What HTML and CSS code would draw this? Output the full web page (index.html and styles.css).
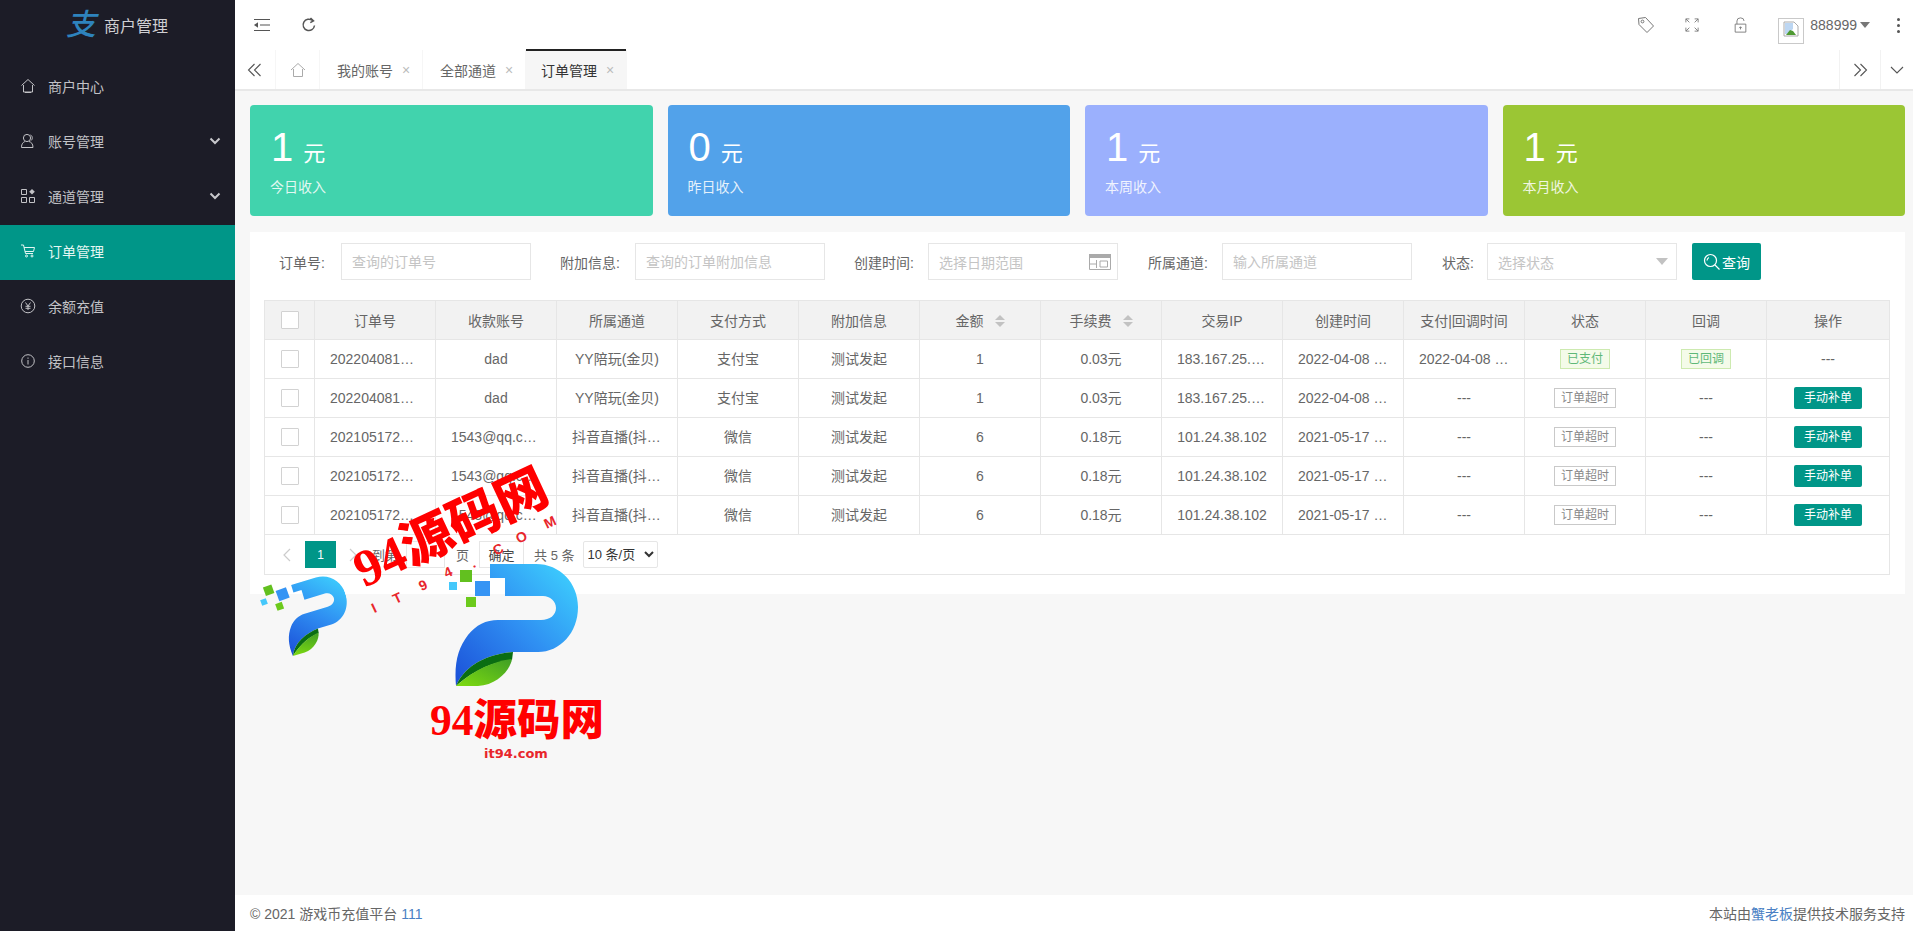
FILE: index.html
```html
<!DOCTYPE html>
<html lang="zh">
<head>
<meta charset="utf-8">
<title>商户管理</title>
<link rel="stylesheet" href="styles.css">
</head>
<body>
<svg class="defs" width="0" height="0">
  <defs>
    <linearGradient id="pBody" x1="0" y1="1" x2="1" y2="0">
      <stop offset="0" stop-color="#1b4fd8"/><stop offset="0.5" stop-color="#2f8ff2"/><stop offset="1" stop-color="#3fd6ff"/>
    </linearGradient>
    <linearGradient id="pLeaf" x1="0" y1="1" x2="1" y2="0">
      <stop offset="0" stop-color="#7fdc10"/><stop offset="1" stop-color="#3f9e25"/>
    </linearGradient>
    <symbol id="pmark" viewBox="0 0 130 124">
      <path fill="url(#pBody)" d="M42 1H88C112 1 130 20 130 44C130 70 112 89 90 89H65C42 91 18 100 8 123C6 100 10 85 20 72C28 62 38 57 50 57H93C102 57 108 52 108 45C108 38 102 33 95 33H57V15H42Z"/>
      <path fill="#0a6d12" d="M65 89C42 91 18 100 8 123C30 104 48 99 64 97Z"/>
      <path fill="url(#pLeaf)" d="M64 96C48 98 28 105 8 123H30C48 122 62 108 64 96Z"/>
    </symbol>
  </defs>
</svg>

<div class="app">
  <aside class="side">
    <div class="brand"><span class="brand-mark">支</span><span class="brand-name">商户管理</span></div>
    <nav class="menu">
      <a class="item">
        <svg class="ico" viewBox="0 0 16 16"><path d="M1.500 7.500 8 1.500l6.500 6M3.500 7v7h9V7M5 14.500h6"/></svg>
        <span>商户中心</span>
      </a>
      <a class="item">
        <svg class="ico" viewBox="0 0 16 16"><circle cx="7" cy="5" r="3.600"/><path d="M1.500 14.500c0-4 2-5.500 3.600-6M9 8.500c2.200.6 4 2.200 4 6H1.500M10.500 2c2 .8 2.500 4 .6 5.500"/></svg>
        <span>账号管理</span>
        <svg class="chev" viewBox="0 0 12 8"><path d="M1.500 1.500 6 6l4.500-4.500"/></svg>
      </a>
      <a class="item">
        <svg class="ico" viewBox="0 0 16 16"><path d="M1.500 1.500h5v5h-5zM1.500 9.500h5v5h-5zM9.500 9.500h5v5h-5z"/><path class="solid" d="M12 1l2.800 2.800L12 6.600 9.200 3.800z"/></svg>
        <span>通道管理</span>
        <svg class="chev" viewBox="0 0 12 8"><path d="M1.500 1.500 6 6l4.500-4.500"/></svg>
      </a>
      <a class="item on">
        <svg class="ico" viewBox="0 0 16 16"><path d="M1 2h2.500l2 8.500h7.500M4 4.500h10.500l-1 4H5"/><circle cx="6.500" cy="13" r="1"/><circle cx="12" cy="13" r="1"/></svg>
        <span>订单管理</span>
      </a>
      <a class="item">
        <svg class="ico" viewBox="0 0 16 16"><circle cx="8" cy="8" r="6.800"/><path d="M5.500 4.500 8 8l2.500-3.500M8 8v4M5.500 8.300h5M5.500 10.300h5"/></svg>
        <span>余额充值</span>
      </a>
      <a class="item">
        <svg class="ico" viewBox="0 0 16 16"><circle cx="8" cy="8" r="6.300"/><path d="M8 7v4.500M8 4.500v1.300"/></svg>
        <span>接口信息</span>
      </a>
    </nav>
  </aside>

  <div class="main">
    <header class="top">
      <svg class="top-ico" viewBox="0 0 18 14"><path d="M1 1.500h16M7 7h10M1 12.500h16"/><path class="solid" d="M5 4.200v5.600L1 7z"/></svg>
      <svg class="top-ico refresh" viewBox="0 0 16 16"><path d="M13.500 8.500A5.700 5.700 0 1 1 11.500 3.500M9.500 1l3 2.800-3.200 1.800"/></svg>
      <div class="top-right">
        <svg class="r-ico" viewBox="0 0 18 18"><path d="M1.500 2.500 8.500 1.500l8 8.500-6.500 6.500-8-8z"/><circle cx="5.500" cy="5.500" r="1.400"/></svg>
        <svg class="r-ico small" viewBox="0 0 16 16"><path d="M1 5V1h4M1 1l4 4M11 1h4v4M15 1l-4 4M1 11v4h4M1 15l4-4M15 11v4h-4M15 15l-4-4"/></svg>
        <svg class="r-ico lock" viewBox="0 0 16 18"><path d="M2 8h12v9H2zM4 8V4.500a4 3.500 0 0 1 8 0M8 11v3M6.500 12.500 8 11l1.500 1.500"/></svg>
        <div class="user">
          <span class="avatar"><svg class="broken" viewBox="0 0 16 16"><path class="paper" d="M1 1h10l4 4v10H1z"/><path class="sky" d="M2 2h8v6l-6 5H2z"/><path class="hill" d="M3 14l4-5 3 1 3 4z"/></svg></span>
          <span class="uname">888999</span><span class="caret"></span>
        </div>
        <span class="dots"><i></i><i></i><i></i></span>
      </div>
    </header>

    <div class="tabs">
      <span class="tab-btn first"><svg class="dbl" viewBox="0 0 16 14"><path d="M7.500 1 1.500 7l6 6M13.500 1l-6 6 6 6"/></svg></span>
      <span class="tab-btn home"><svg class="homei" viewBox="0 0 16 16"><path d="M1 8 8 1.500 15 8M3.500 7v7.500h9V7"/></svg></span>
      <span class="tab">我的账号<b>×</b></span>
      <span class="tab">全部通道<b>×</b></span>
      <span class="tab active">订单管理<b>×</b></span>
      <span class="tab-fill"></span>
      <span class="tab-btn next"><svg class="dbl" viewBox="0 0 16 14"><path d="M2.500 1l6 6-6 6M8.500 1l6 6-6 6"/></svg></span>
      <span class="tab-btn down"><svg class="dn" viewBox="0 0 14 8"><path d="M1 1l6 6 6-6"/></svg></span>
    </div>

    <main class="content">
      <section class="cards">
        <div class="card c1"><div class="num">1<small>元</small></div><div class="cap">今日收入</div></div>
        <div class="card c2"><div class="num">0<small>元</small></div><div class="cap">昨日收入</div></div>
        <div class="card c3"><div class="num">1<small>元</small></div><div class="cap">本周收入</div></div>
        <div class="card c4"><div class="num">1<small>元</small></div><div class="cap">本月收入</div></div>
      </section>

      <section class="panel">
        <form class="search">
          <label class="lb l1">订单号:</label>
          <input class="ipt w1" placeholder="查询的订单号">
          <label class="lb l2">附加信息:</label>
          <input class="ipt w1" placeholder="查询的订单附加信息">
          <label class="lb l3">创建时间:</label>
          <div class="ipt w1 fake"><span class="ph">选择日期范围</span>
            <svg class="cal" viewBox="0 0 22 16"><path class="solid" d="M0 0h22v4H0z"/><path d="M.5 4v11.500h21V4M7.500 6v8M.5 10h7M11 7h7.500v6H11z"/></svg>
          </div>
          <label class="lb l4">所属通道:</label>
          <input class="ipt w1" placeholder="输入所属通道">
          <label class="lb l5">状态:</label>
          <div class="ipt w1 fake"><span class="ph">选择状态</span><span class="sel-caret"></span></div>
          <button type="button" class="go">
            <svg class="mag" viewBox="0 0 18 18"><circle cx="7.500" cy="7.500" r="6"/><path d="M12 12l4.500 4.500M4 7.500a3.500 3.500 0 0 1 2-3"/></svg>查询
          </button>
        </form>

        <div class="grid-wrap">
          <table class="grid">
            <colgroup><col class="cc"><col class="cw"><col class="cw"><col class="cw"><col class="cw"><col class="cw"><col class="cw"><col class="cw"><col class="cw"><col class="cw"><col class="cw"><col class="cw"><col class="cw"><col class="cl"></colgroup>
            <thead>
              <tr>
                <th><i class="chk"></i></th><th>订单号</th><th>收款账号</th><th>所属通道</th><th>支付方式</th><th>附加信息</th>
                <th>金额<span class="sort"></span></th><th>手续费<span class="sort"></span></th><th>交易IP</th><th>创建时间</th><th>支付|回调时间</th><th>状态</th><th>回调</th><th>操作</th>
              </tr>
            </thead>
            <tbody>
              <tr>
                <td><i class="chk"></i></td><td><div class="cut">20220408135627194</div></td><td><div class="cut">dad</div></td><td><div class="cut">YY陪玩(金贝)</div></td><td><div class="cut">支付宝</div></td><td><div class="cut">测试发起</div></td><td><div class="cut">1</div></td><td><div class="cut">0.03元</div></td><td><div class="cut">183.167.25.214</div></td><td><div class="cut">2022-04-08 13:56:27</div></td><td><div class="cut">2022-04-08 13:57:02</div></td><td><span class="tag ok">已支付</span></td><td><span class="tag ok">已回调</span></td><td><div class="cut">---</div></td>
              </tr>
              <tr>
                <td><i class="chk"></i></td><td><div class="cut">20220408135512077</div></td><td><div class="cut">dad</div></td><td><div class="cut">YY陪玩(金贝)</div></td><td><div class="cut">支付宝</div></td><td><div class="cut">测试发起</div></td><td><div class="cut">1</div></td><td><div class="cut">0.03元</div></td><td><div class="cut">183.167.25.214</div></td><td><div class="cut">2022-04-08 13:55:12</div></td><td><div class="cut">---</div></td><td><span class="tag">订单超时</span></td><td><div class="cut">---</div></td><td><span class="fix">手动补单</span></td>
              </tr>
              <tr>
                <td><i class="chk"></i></td><td><div class="cut">20210517221034561</div></td><td><div class="cut">1543@qq.com</div></td><td><div class="cut">抖音直播(抖音支付)</div></td><td><div class="cut">微信</div></td><td><div class="cut">测试发起</div></td><td><div class="cut">6</div></td><td><div class="cut">0.18元</div></td><td><div class="cut">101.24.38.102</div></td><td><div class="cut">2021-05-17 22:10:34</div></td><td><div class="cut">---</div></td><td><span class="tag">订单超时</span></td><td><div class="cut">---</div></td><td><span class="fix">手动补单</span></td>
              </tr>
              <tr>
                <td><i class="chk"></i></td><td><div class="cut">20210517220918342</div></td><td><div class="cut">1543@qq.com</div></td><td><div class="cut">抖音直播(抖音支付)</div></td><td><div class="cut">微信</div></td><td><div class="cut">测试发起</div></td><td><div class="cut">6</div></td><td><div class="cut">0.18元</div></td><td><div class="cut">101.24.38.102</div></td><td><div class="cut">2021-05-17 22:09:18</div></td><td><div class="cut">---</div></td><td><span class="tag">订单超时</span></td><td><div class="cut">---</div></td><td><span class="fix">手动补单</span></td>
              </tr>
              <tr>
                <td><i class="chk"></i></td><td><div class="cut">20210517220756128</div></td><td><div class="cut">1543@qq.com</div></td><td><div class="cut">抖音直播(抖音支付)</div></td><td><div class="cut">微信</div></td><td><div class="cut">测试发起</div></td><td><div class="cut">6</div></td><td><div class="cut">0.18元</div></td><td><div class="cut">101.24.38.102</div></td><td><div class="cut">2021-05-17 22:07:56</div></td><td><div class="cut">---</div></td><td><span class="tag">订单超时</span></td><td><div class="cut">---</div></td><td><span class="fix">手动补单</span></td>
              </tr>
            </tbody>
          </table>
          <div class="pager">
            <svg class="pg-arrow" viewBox="0 0 8 14"><path d="M7 1 1 7l6 6"/></svg>
            <span class="pg-cur">1</span>
            <svg class="pg-arrow after" viewBox="0 0 8 14"><path d="M1 1l6 6-6 6"/></svg>
            <span class="pg-txt">到第</span>
            <input class="pg-ipt" value="1">
            <span class="pg-txt pg-unit">页</span>
            <span class="pg-ok">确定</span>
            <span class="pg-txt total">共 5 条</span>
            <select class="pg-sel"><option>10 条/页</option></select>
          </div>
        </div>
      </section>
    </main>

    <footer class="foot">
      <span>© 2021 游戏币充值平台 <a class="lnk">111</a></span>
      <span>本站由<a class="lnk">蟹老板</a>提供技术服务支持</span>
    </footer>
  </div>
</div>

<div class="mark">
  <svg class="logo-big" viewBox="0 0 130 124">
    <rect x="1" y="19" width="8" height="8" fill="#45c8fb"/>
    <rect x="12" y="7" width="12" height="12" fill="#62c01f"/>
    <rect x="27" y="18" width="15" height="15" fill="#3594f4"/>
    <rect x="18" y="34" width="10" height="10" fill="#6cca1c"/>
    <use href="#pmark" width="130" height="124"/>
  </svg>
  <svg class="logo-small"><use href="#pmark"/></svg>
  <svg class="bits-small" viewBox="0 0 40 30">
    <rect x="6" y="4" width="9" height="9" fill="#62c01f" transform="rotate(-20 10 8)"/>
    <rect x="19" y="7" width="11" height="11" fill="#3594f4" transform="rotate(-20 24 12)"/>
    <rect x="3" y="17" width="6" height="6" fill="#45c8fb" transform="rotate(-20 6 20)"/>
    <rect x="18" y="21" width="7" height="7" fill="#6cca1c" transform="rotate(-20 21 24)"/>
  </svg>
  <div class="wm-tilt">94源码网</div>
  <span class="wl a1">I</span><span class="wl a2">T</span><span class="wl a3">9</span><span class="wl a4">4</span><span class="wl a5">.</span><span class="wl a6">C</span><span class="wl a7">O</span><span class="wl a8">M</span>
  <div class="wm-flat">94源码网</div>
  <div class="wm-url">it94.com</div>
</div>
</body>
</html>
```

FILE: styles.css
```css
* { box-sizing: border-box; }
html, body { margin: 0; height: 100%; overflow: hidden; }
body {
  position: relative;
  font-family: "Liberation Sans", "Noto Sans CJK SC", sans-serif;
  font-size: 14px;
  color: #666;
  background: #f7f7f7;
}
.defs { position: absolute; }
.app { display: flex; height: 931px; }

/* sidebar */
.side { width: 235px; flex: none; background: #1c1c27; color: #c2c2c6; }
.brand { height: 50px; display: flex; align-items: center; justify-content: center; gap: 8px; padding-right: 1px; }
.brand-mark { font-size: 30px; font-weight: 500; color: #2e83bd; font-style: italic; line-height: 1; }
.brand-name { color: #cfcfd3; font-size: 16px; }
.menu { padding-top: 10px; }
.item { height: 55px; display: flex; align-items: center; padding: 0 0 4px 20px; position: relative; }
.item.on { background: #009688; color: #e4f7f3; }
.ico { width: 16px; height: 16px; margin-right: 12px; fill: none; stroke: currentColor; stroke-width: 1; flex: none; }
.ico .solid { fill: currentColor; stroke: none; }
.chev { position: absolute; right: 14px; top: 22px; width: 12px; height: 8px; fill: none; stroke: #c8c8cc; stroke-width: 2; }

/* header */
.main { flex: 1; min-width: 0; display: flex; flex-direction: column; }
.top { height: 50px; background: #fff; display: flex; align-items: center; padding-left: 18px; flex: none; }
.top-ico { width: 18px; height: 14px; fill: none; stroke: #555; stroke-width: 1.2; }
.top-ico .solid { fill: #555; stroke: none; }
.refresh { width: 16px; height: 16px; margin-left: 30px; stroke-width: 1.5; }
.top-right { margin-left: auto; display: flex; align-items: center; }
.r-ico { width: 18px; height: 18px; fill: none; stroke: #777; stroke-width: 1; margin-right: 30px; }
.r-ico.small { width: 14px; height: 14px; margin-right: 34px; }
.r-ico.lock { width: 15px; height: 16px; margin-right: 30px; }
.user { display: flex; align-items: center; margin-right: 27px; }
.avatar { width: 26px; height: 26px; border: 1px solid #c9c9c9; display: flex; padding: 2px; align-items: flex-start; justify-content: center; margin: 11px 6px 0 0; }
.broken { width: 16px; height: 16px; }
.paper { fill: #fff; stroke: #aaa; stroke-width: 1; }
.sky { fill: #bcd6f2; }
.hill { fill: #4f9a32; }
.uname { color: #666; }
.caret { margin-left: 3px; width: 0; height: 0; border: 5.500px solid transparent; border-top: 6px solid #777; border-bottom: 0; }
.dots { display: flex; flex-direction: column; gap: 3px; margin-right: 13px; }
.dots i { display: block; width: 3px; height: 3px; background: #555; border-radius: 50%; }

/* tabs */
.tabs { height: 41px; flex: none; background: #fff; display: flex; align-items: stretch; border-bottom: 2px solid #e8e8e8; box-shadow: 0 1px 0 #f2f2f2; }
.tab-btn { display: flex; align-items: center; justify-content: center; border-right: 1px solid #f6f6f6; }
.tab-btn.first { width: 41px; }
.tab-btn.home { width: 44px; }
.tab-btn.next { width: 41px; border-left: 1px solid #f2f2f2; border-right: 0; }
.tab-btn.down { width: 33px; border-left: 1px solid #f2f2f2; border-right: 0; }
.dbl { width: 16px; height: 14px; fill: none; stroke: #555; stroke-width: 1.1; }
.homei { width: 16px; height: 16px; fill: none; stroke: #aaa; stroke-width: 1; }
.dn { width: 14px; height: 8px; fill: none; stroke: #555; stroke-width: 1.1; }
.tab { width: 103px; display: flex; align-items: center; padding-left: 17px; color: #666; border-right: 1px solid #f6f6f6; }
.tab b { font-weight: 400; font-size: 14px; color: #bbb; margin-left: 9px; }
.tab.active { width: 101px; padding-left: 15px; background: #f6f6f6; color: #333; position: relative; }
.tab.active::before { content: ""; position: absolute; left: 0; right: 0; top: -1px; height: 2px; background: #222; }
.tab-fill { flex: 1; }

/* content */
.content { flex: 1; min-height: 0; padding: 14px 8px 0 15px; background: #f7f7f7; }
.cards { display: flex; gap: 15px; }
.card { flex: 1; height: 111px; border-radius: 4px; padding: 19px 18px 0 20px; color: #fff; }
.c1 { background: #41d3ad; }
.c2 { background: #52a2ea; }
.c3 { background: #9bb0fd; }
.c4 { background: #9bc634; }
.num { font-size: 40px; line-height: 46px; margin-left: 1px; }
.num small { font-size: 22px; margin-left: 10px; }
.cap { font-size: 14px; line-height: 20px; margin-top: 0; opacity: .85; }

.panel { margin-top: 16px; background: #fff; height: 362px; padding: 11px 15px 0; }
.search { display: flex; align-items: center; height: 37px; }
.lb { color: #666; white-space: nowrap; }
.l1 { margin-left: 14px; width: 47px; margin-right: 15px; }
.l2 { width: 75px; margin-left: 29px; }
.l3 { width: 74px; margin-left: 29px; }
.l4 { width: 74px; margin-left: 30px; }
.l5 { width: 45px; margin-left: 30px; }
.ipt { height: 37px; border: 1px solid #e6e6e6; padding: 0 10px; font: inherit; color: #666; outline: 0; background: #fff; }
.ipt::placeholder, .ph { color: #c4c4c4; }
.w1 { width: 190px; }
.fake { display: flex; align-items: center; justify-content: space-between; }
.cal { width: 22px; height: 16px; fill: none; stroke: #aaa; stroke-width: 1; margin-right: -4px; }
.cal .solid { fill: #aaa; stroke: none; }
.sel-caret { width: 0; height: 0; border: 6px solid transparent; border-top: 7px solid #c2c2c2; border-bottom: 0; margin-right: -2px; }
.go { margin-left: 15px; width: 69px; height: 37px; border: 0; border-radius: 2px; background: #009688; color: #fff; font: inherit; display: flex; align-items: center; justify-content: center; gap: 1px; padding: 0; }
.mag { width: 18px; height: 18px; fill: none; stroke: #fff; stroke-width: 1.2; }

.grid-wrap { margin: 20px 0 0 -1px; width: 1626px; border-bottom: 1px solid #e6e6e6; border-right: 1px solid #e6e6e6; }
.grid { border-collapse: collapse; table-layout: fixed; width: 1626px; }
.cc { width: 50px; }
.cw { width: 121px; }
.cl { width: 123px; }
.grid th, .grid td { border: 1px solid #e6e6e6; height: 39px; padding: 0 15px; text-align: center; font-weight: 400; color: #666; }
.grid th { background: #f2f2f2; }
.cut { overflow: hidden; white-space: nowrap; text-overflow: ellipsis; line-height: 20px; }
.chk { display: block; width: 18px; height: 18px; border: 1px solid #d2d2d2; background: #fff; margin: 0 auto; border-radius: 1px; }
.sort { display: inline-block; margin-left: 11px; width: 10px; height: 12px; vertical-align: -1px; position: relative; }
.sort::before, .sort::after { content: ""; position: absolute; left: 0; border: 5px solid transparent; }
.sort::before { top: -5px; border-bottom: 5px solid #c2c2c2; }
.sort::after { top: 7px; border-top: 5px solid #c2c2c2; }
.grid td:has(.tag), .grid td:has(.fix) { padding: 0; }
.tag { display: inline-block; height: 20px; line-height: 18px; padding: 0 6px; font-size: 12px; border: 1px solid #c9c9c9; color: #888; }
.tag.ok { border-color: #cdeab0; background: #f4fbe9; color: #5fb878; }
.fix { display: inline-block; width: 68px; height: 22px; line-height: 22px; font-size: 12px; background: #009688; color: #fff; border-radius: 2px; }

.pager { height: 39px; display: flex; align-items: center; border-left: 1px solid #e6e6e6; padding-left: 18px; font-size: 13px; color: #666; }
.pg-arrow { width: 8px; height: 14px; fill: none; stroke: #ccc; stroke-width: 1.2; }
.pg-cur { width: 31px; height: 27px; margin-left: 14px; background: #009688; color: #fff; display: flex; align-items: center; justify-content: center; font-size: 12px; }
.pg-arrow.after { margin-left: 13px; }
.pg-txt { margin-left: 15px; }
.pg-ipt { width: 39px; height: 27px; margin-left: 8px; border: 1px solid #e6e6e6; font: inherit; color: #666; text-align: center; }
.pg-unit { margin-left: 11px; }
.pg-ok { width: 45px; height: 27px; margin-left: 10px; border: 1px solid #e6e6e6; display: flex; align-items: center; justify-content: center; color: #444; }
.total { margin-left: 10px; }
.pg-sel { margin-left: 8px; width: 75px; height: 27px; border: 1px solid #e6e6e6; background: #fff; font: inherit; color: #333; border-radius: 2px; }

.foot { height: 36px; flex: none; background: #fff; display: flex; align-items: center; justify-content: space-between; padding: 0 8px 0 15px; font-size: 14px; color: #666; }
.lnk { color: #4a7fc4; }

/* watermark floats over the page */
.mark { position: absolute; inset: 0; pointer-events: none; }
.logo-big { position: absolute; left: 448px; top: 563px; width: 130px; height: 124px; }
.logo-small { position: absolute; left: 277px; top: 579px; width: 73px; height: 70px; transform: rotate(-17deg); }
.bits-small { position: absolute; left: 258px; top: 582px; width: 40px; height: 30px; }
.wm-tilt, .wm-flat { position: absolute; color: #f00; font-weight: 900; white-space: nowrap; font-family: "Liberation Serif", "Noto Sans CJK SC", serif; }
.wm-tilt { left: 369px; top: 541px; font-size: 52px; line-height: 58px; transform: rotate(-25deg); transform-origin: left bottom; }
.wm-flat { left: 430px; top: 695px; font-size: 43.500px; line-height: 50px; }
.wm-url { position: absolute; left: 484px; top: 745px; font-size: 13px; line-height: 18px; color: #e8262c; font-weight: 700; font-family: "DejaVu Sans", sans-serif; }
.wl { position: absolute; color: #e8262c; font-size: 14px; line-height: 16px; font-weight: 700; transform: rotate(-25deg); }
.a1 { left: 372px; top: 600px; }
.a2 { left: 393px; top: 590px; }
.a3 { left: 419px; top: 577px; }
.a4 { left: 444px; top: 564px; }
.a5 { left: 471px; top: 555px; }
.a6 { left: 493px; top: 541px; }
.a7 { left: 516px; top: 529px; }
.a8 { left: 544px; top: 514px; }
```
